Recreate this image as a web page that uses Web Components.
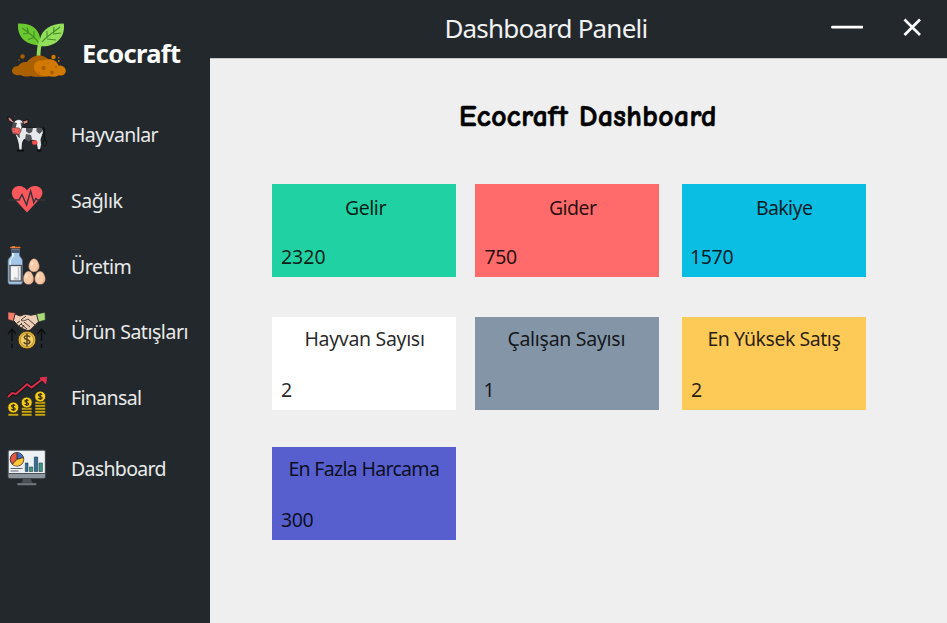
<!DOCTYPE html>
<html lang="tr"><head><meta charset="utf-8"><title>Ecocraft</title>
<style>
body{margin:0;font-family:"Segoe UI","Noto Sans","Open Sans",sans-serif;background:#efefef}
</style></head><body>
<eco-app></eco-app>
<script>
const root=(el,html)=>{el.attachShadow({mode:'open'}).innerHTML=html};

/* Text run whose visible width is set by its "w" attribute through letter spacing. */
customElements.define('fit-text',class extends HTMLElement{
  connectedCallback(){
    root(this,'<style>:host{display:block;white-space:pre}span{display:block}</style><span><slot></slot></span>');
    const s=getComputedStyle(this),c=document.createElement('canvas').getContext('2d'),t=this.textContent;
    c.font=`${s.fontWeight} ${s.fontSize} ${s.fontFamily}`;
    const m=c.measureText(t),ink=m.actualBoundingBoxRight+m.actualBoundingBoxLeft,w=+this.getAttribute('w');
    const span=this.shadowRoot.querySelector('span');
    span.style.marginLeft=m.actualBoundingBoxLeft+'px';
    if(w&&t.length>1)span.style.letterSpacing=(w-ink)/(t.length-1)+'px';
  }
});

const coin=(x,y)=>`<circle cx="${x}" cy="${y}" r="5.5" fill="#f3cc13" stroke="#242019" stroke-width=".8"/><path d="M${x+1.8} ${y-1.8}c-1-1.2-3.6-1-3.6.4 0 1.8 3.7 1 3.7 2.8 0 1.4-2.8 1.7-3.9.3M${x} ${y-3.6}v7.2" fill="none" stroke="#302811" stroke-width="1.1"/>`;
const egg=(x,y)=>`<path d="M${x} ${y}c3 0 5.4 4.5 5.4 8 0 3.2-2.4 5.6-5.4 5.6s-5.4-2.4-5.4-5.6c0-3.5 2.4-8 5.4-8z" fill="#f8cba8" stroke="#4b3b35" stroke-width=".6"/><path d="M${x+1} ${y+1.2}c4 4 4 9-1 11.6 6 .3 6-7.500 1-11.600z" fill="#eeb28d"/><ellipse cx="${x-2}" cy="${y+5}" rx="1.2" ry="2" fill="#ffe4cd"/>`;
const bars=(x,y,n)=>Array.from({length:n},(_,i)=>`<rect x="${x}" y="${y-i*3}" width="10.400" height="2.500" rx=".6" fill="#c7a615" stroke="#292413" stroke-width=".5"/>`).join('');
const icons={
sprout:`<svg width="60" height="60" viewBox="8 20 60 60">
<path d="M18 23.500c11-.5 20 3.500 22 14 .8 3 .5 5.500 0 8C28 45 17 39 18 23.500z" fill="#6bc82f"/>
<path d="M63.800 23.500C52 23.500 42 29 40 39c-.4 3-.2 5 .6 7.200C53 47.500 66 39 63.800 23.500z" fill="#93df5c"/>
<path d="M40.800 40c-1.800 6-2.300 13-2.300 18" fill="none" stroke="#91db58" stroke-width="3.800"/>
<path d="M22 28c6 4 12 8 16.500 14.500M27 27.500l1.500 5M34 31v6.500M23 34l5.500-1M28 39.500l6-2M60 27c-6 5-13 9-18 15M54 27l-.5 6M47 31v7M61 33l-8 1M56 40l-9-1" fill="none" stroke="#408c25" stroke-width="1.100"/>
<path d="M12 71c0-3 3-5.500 6-4.700 1.500-3 5-4.800 9-4.300 3-4 7.500-6.500 12-6.500 5 0 9 2.500 11 6.500l-2 14.500-7 .5c-4-.5-6 .5-10-1-4 .9-8 .8-10-1-5 .9-9-1-9-4z" fill="#ab6000"/>
<path d="M43.500 76c-8-1-12-9-8-13.500 2-2.500 5-2 8-2 5-2.500 13-1.500 15 5 4-.5 7.500 2 7.300 5.500-.3 4-4 5-7 4.200-4 2.500-7 1.400-10 1z" fill="#d17900"/>
<g fill="#ab6000"><circle cx="43.500" cy="68" r="2.200"/><circle cx="52" cy="72.500" r="2"/><circle cx="56" cy="67" r="1"/><circle cx="39" cy="72.500" r=".8"/><circle cx="48" cy="63.500" r=".7"/><circle cx="22.500" cy="56.500" r="2.200"/><circle cx="19" cy="60" r=".8"/></g>
<g fill="#d17900"><circle cx="53.500" cy="57" r="2.200"/><circle cx="58.800" cy="57.800" r=".8"/><circle cx="58.800" cy="61" r=".9"/></g></svg>`,
cow:`<svg width="48" height="48" viewBox="4 110 48 48">
<path d="M43 127c3 2 0 9 2 14" fill="none" stroke="#101214" stroke-width="1.600"/><ellipse cx="44.800" cy="143" rx="1.700" ry="3" fill="#2a2d30" stroke="#0c0e0f"/>
<path d="M19 127l7 .5h12c4 .2 6 2.500 5 6l-2 6 .5 5-1 5.500h-3l-1.500-9-5-1-7-.5-1.500 3-.5 8h-3l-.5-5-1-5-3-8-1-4z" fill="#e6e8ec" stroke="#111416" stroke-width=".9"/>
<path d="M26 128h7l-1 4-3 1.500-3-2zM36.500 127.500l5 .5 1 3-3 3-3-2.500zM26 134l5 1 1 4-3 2.500-4-2zM16.500 133l3 1 .5 4-2-1z" fill="#505459"/>
<path d="M32 141l4.500-.8 1.500 3-3 1.800-2.500-.8z" fill="#fa4e4b"/>
<path d="M17 149.500h7v2h-7zM37 149.500h4.500v2H37z" fill="#0c0e10"/>
<path d="M16 124.500L9 121l-1.500-4 2 .4M13 121l.5-5 1.500-2M23 121l5-1.500 0 3.500-4 1.500" fill="#d68c82" stroke="#111416" stroke-width="1"/>
<path d="M14 122c2-3 7-3.500 9 0l-1 5-2 5c-2 3-7 3-8 0l-.7-4z" fill="#f4f5f7" stroke="#15181a" stroke-width=".7"/>
<path d="M13 122l4 1-1.500 5-4.200.8zM20.500 122.500l2.700.5-2 4z" fill="#484c51"/>
<path d="M12 127.500l7 .5 2.200 3-2 3-4 .5-3-3z" fill="#f76863" stroke="#512b2b" stroke-width=".6"/><path d="M14 130h1M18 131h1M14 133l3 .3" stroke="#913d3a"/></svg>`,
heart:`<svg width="48" height="40" viewBox="4 180 48 40">
<path d="M27 212.500L14.500 199c-5-5.500-2.500-12.500 4-13 3.500-.3 6.500 1.500 8.500 4.200 2-2.700 5-4.500 8.500-4.200 7 .5 9.500 7.500 4 13z" fill="#f8575c"/><path d="M8 200h11l3-5.500 4.600 10.500 4-14 3.200 11.500 2-4 2 1.500H46" fill="none" stroke="#343337" stroke-width="1.400"/></svg>`,
milk:`<svg width="48" height="48" viewBox="4 242 48 48">
<path d="M11.500 249h8v6c.3 2.500 3 3 3 6v21c0 1.500-1 2.300-2.500 2.300H10.500c-1.500 0-2.500-.8-2.500-2.300v-21c0-3 3-4 3.500-6z" fill="#a4c7e9" stroke="#52677c" stroke-width=".8"/>
<path d="M12 250h2v6l-3 4v21H9.500v-20l2.500-4z" fill="#e1f0fb"/><path d="M11.500 249.500h8v3.500h-8z" fill="#485b71"/>
<rect x="10" y="246.700" width="10.500" height="1.500" rx=".6" fill="#f3722c"/><path d="M12 246.900h3" stroke="#ffb248"/>
<rect x="10" y="265.500" width="11.300" height="15.500" fill="#f4f5f6" stroke="#4a4d52" stroke-width="1.300"/><path d="M18.500 267v12h-3v-2M13.500 278.500h3" fill="none" stroke="#b8bbc1" stroke-width="1.400"/>
${egg(34,258.500)}${egg(28.500,271)}${egg(40,271)}</svg>`,
deal:`<svg width="48" height="48" viewBox="4 307 48 48">
<path d="M8 312l7.500 1-1 8.500-6.500-2z" fill="#f87a6b" stroke="#302a2a" stroke-width=".6"/><path d="M36 314l9-1.500.3 7.500-7.300 2z" fill="#a9d978" stroke="#29302a" stroke-width=".6"/>
<path d="M15 314l5 2 5-1.800 6 1 5.500-1 2 7.500-3 3-5 5c-2 1.700-5 .2-7-.7l-5-3-5-5.500z" fill="#edcfb8" stroke="#322b28" stroke-width="1"/>
<path d="M26 316l-5 4c2 2 5 0 7-1l7 6M24 322l6 5M21 324l6 5M17 323l3-2M19 326l3-3M22 328l2-3" fill="none" stroke="#493c37" stroke-width="1"/>
<circle cx="27" cy="340" r="9" fill="#dcb038" stroke="#302814" stroke-width="1"/><circle cx="27" cy="340" r="6.700" fill="#f2ce66" stroke="#b28a29" stroke-width=".8"/>
<path d="M30 337c-1.300-2-6-1.700-5.700.6.200 2.600 5.700 1.800 5.500 4.500-.3 2.400-5 2.300-6 0M27 333.500v13" fill="none" stroke="#5b4621" stroke-width="1.500"/>
<path d="M12 341v-12m-4 5l4-5 4 5M12 344v4M41.500 341v-12m-4 5l4-5 4 5M41.500 344v4" fill="none" stroke="#0b0d0e" stroke-width="1.400"/></svg>`,
finance:`<svg width="48" height="48" viewBox="4 373 48 48">
<path d="M8 397l4-4 4 1 11-9.800 4.500 3.300 9-7" fill="none" stroke="#151719" stroke-width="4"/><path d="M8 397l4-4 4 1 11-9.800 4.500 3.300 11-8.500" fill="none" stroke="#dc2e4c" stroke-width="2"/><path d="M40 378l6.500-.8-.7 6.500z" fill="#dc2e4c" stroke="#dc2e4c" stroke-width="1"/>
${bars(8.100,413.500,1)}${bars(21.500,413.500,3)}${bars(35,413.500,5)}${coin(13.300,407.500)}${coin(26.700,402.500)}${coin(40.200,396.500)}</svg>`,
monitor:`<svg width="48" height="48" viewBox="4 444 48 48">
<rect x="8" y="450" width="37.500" height="28.500" rx="1.700" fill="#8d949c" stroke="#3d4247" stroke-width=".8"/><path d="M9 451h35.700v22H9z" fill="#edf1f6"/><path d="M8.500 473.500H45" stroke="#4b5057"/>
<path d="M23 479h8l1.500 4.300H21.500z" fill="#4b5056"/><rect x="17" y="483" width="19.500" height="2.300" rx="1" fill="#777d84" stroke="#33383c" stroke-width=".5"/>
<circle cx="17" cy="459.300" r="6.800" fill="#e95640" stroke="#282c31" stroke-width=".9"/><path d="M17 459.300v-6.400a6.400 6.400 0 0 1 6.100 4.700z" fill="#3b6cbd"/><path d="M17 459.300l6.100-1.700a6.400 6.400 0 0 1-10.500 6.400z" fill="#ffc938"/><path d="M17 453v6.300l6.200-1.700M17 459.300l-4.700 4.900" fill="none" stroke="#292b30" stroke-width=".9"/>
<path d="M10.500 468.500h12M10.500 471h8" stroke="#5d646d" stroke-width="1"/>
<g stroke="#2b3b43" stroke-width=".6"><path d="M25.300 463h2.700v8.500h-2.700zM34.300 457h3.400v14.500h-3.400z" fill="#2d6d9b"/><path d="M29.500 467h3.200v4.500h-3.200zM39 463h3.400v8.500H39z" fill="#3b9b80"/></g></svg>`};

customElements.define('eco-icon',class extends HTMLElement{
  connectedCallback(){root(this,'<style>:host,svg{display:block}</style>'+icons[this.getAttribute('name')])}
});

customElements.define('nav-item',class extends HTMLElement{
  connectedCallback(){
    root(this,`<style>:host{display:grid;grid-template-columns:48px 1fr;column-gap:20px;align-items:center;height:48px;padding-left:4px;font-size:19.500px;line-height:28px;color:#e9eaea}
    ::slotted(fit-text){padding-top:1px}</style>
    <eco-icon name="${this.getAttribute('icon')}"></eco-icon><slot></slot>`);
  }
});

customElements.define('side-bar',class extends HTMLElement{
  connectedCallback(){
    root(this,`<style>:host{display:block;background:#23282c;color:#fff}
    header{display:flex;padding:20px 0 0 8px;height:60px;gap:16px}
    header fit-text{font-size:25.500px;font-weight:700;line-height:34px;padding-top:16px}
    nav{display:grid;grid-template-rows:66px 66px 65px 66px 71px 48px;padding-top:30px}</style>
    <header><eco-icon name="sprout"></eco-icon><fit-text w="97">Ecocraft</fit-text></header>
    <nav><nav-item icon="cow"><fit-text w="86.500">Hayvanlar</fit-text></nav-item>
    <nav-item icon="heart"><fit-text w="51.500">Sağlık</fit-text></nav-item>
    <nav-item icon="milk"><fit-text w="58.500">Üretim</fit-text></nav-item>
    <nav-item icon="deal"><fit-text w="115.500">Ürün Satışları</fit-text></nav-item>
    <nav-item icon="finance"><fit-text w="69">Finansal</fit-text></nav-item>
    <nav-item icon="monitor"><fit-text w="93.500">Dashboard</fit-text></nav-item></nav>`);
  }
});

customElements.define('title-bar',class extends HTMLElement{
  connectedCallback(){
    root(this,`<style>:host{display:grid;grid-template-columns:1fr 32px 20px;column-gap:39px;box-sizing:border-box;height:58px;background:#23282c;color:#f1f2f2;padding:0 25px 0 236px;font-size:26px;line-height:36px}
    fit-text{padding-top:10px}svg{display:block}</style>
    <fit-text w="200">Dashboard Paneli</fit-text>
    <svg width="32" height="58"><path d="M1.500 27.200h29.500" stroke="#fff" stroke-width="2.800" stroke-linecap="round"/></svg>
    <svg width="20" height="58"><path d="M2.500 19.500l15.500 15.500m0-15.500l-15.500 15.500" stroke="#fff" stroke-width="2.700"/></svg>`);
  }
});

customElements.define('stat-card',class extends HTMLElement{
  connectedCallback(){
    const a=n=>this.getAttribute(n);
    root(this,`<style>:host{display:flex;flex-direction:column;justify-content:space-between;box-sizing:border-box;width:184px;height:92.500px;padding:${a('top')||9.500}px 0 ${a('top')?6:5.500}px;background:${a('color')};color:rgba(0,0,0,.86);font-size:19.500px;line-height:28px}
    .label{padding-left:${a('indent')}px}.value{padding-left:9px}</style>
    <fit-text class="label" w="${a('w')}">${a('label')}</fit-text><fit-text class="value" w="${a('vw')||0}">${a('value')}</fit-text>`);
  }
});

customElements.define('eco-app',class extends HTMLElement{
  connectedCallback(){
    root(this,`<style>:host{display:grid;grid-template-columns:210.400px 1fr;width:947px;height:623px;overflow:hidden;background:#efefef}
    main{padding:37px 0 0 61.500px;border-top:1px solid #c6c7c8}
    h1{margin:0 0 0 189px;height:88px;line-height:40px;font-size:29.500px;font-weight:700;font-family:"Comic Sans MS","Comic Neue","Noto Sans",sans-serif;color:#000;-webkit-text-stroke:.7px #000}
    section{display:grid;grid-template-columns:203.500px 206.500px 184px;grid-template-rows:133px 130px 93px}</style>
    <side-bar></side-bar>
    <div><title-bar></title-bar><main><h1><fit-text w="254">Ecocraft Dashboard</fit-text></h1>
    <section>
    <stat-card color="#20d2a3" label="Gelir" w="40.500" indent="74" value="2320" vw="44.500"></stat-card>
    <stat-card color="#ff6b6b" label="Gider" w="47" indent="74.500" value="750" vw="32.500"></stat-card>
    <stat-card color="#0abde3" label="Bakiye" w="55" indent="75" value="1570" vw="42.500"></stat-card>
    <stat-card color="#ffffff" label="Hayvan Sayısı" w="118.500" indent="33.500" value="2" top="7.500"></stat-card>
    <stat-card color="#8395a7" label="Çalışan Sayısı" w="116" indent="33" value="1" top="7.500"></stat-card>
    <stat-card color="#feca57" label="En Yüksek Satış" w="132" indent="26.500" value="2" top="7.500"></stat-card>
    <stat-card color="#575fcf" label="En Fazla Harcama" w="149.500" indent="17.500" value="300" vw="32.500" top="7.500"></stat-card>
    </section></main></div>`);
  }
});
</script></body></html>
